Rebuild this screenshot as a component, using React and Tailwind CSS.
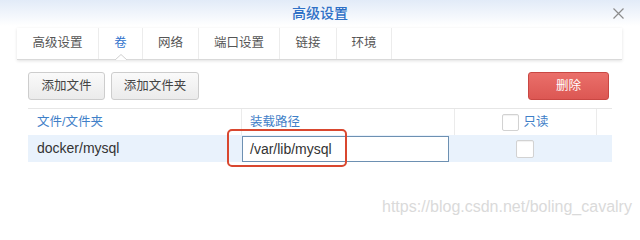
import React from "react";

const tabs = [
  { label: "高级设置", w: "w-[82px]" },
  { label: "卷", w: "w-[44px]", active: true },
  { label: "网络", w: "w-[56px]" },
  { label: "端口设置", w: "w-[81px]" },
  { label: "链接", w: "w-[57px]" },
  { label: "环境", w: "w-[55px]" },
];

function Checkbox({ size }) {
  return (
    <span
      className={`inline-block ${size} bg-white border border-[#d2d2d2] rounded-[2px] shadow-[inset_0_1px_1px_rgba(0,0,0,0.06)]`}
    ></span>
  );
}

export default function App() {
  return (
    <div className="relative w-[640px] h-[226px] overflow-hidden bg-white font-['Liberation_Sans','Noto_Sans_CJK_SC',sans-serif]">
      {/* title bar */}
      <div className="relative h-[26px] flex items-center justify-center bg-gradient-to-b from-[#e2ebf8] to-white">
        <span className="text-[14px] font-medium text-[#2f70c6] leading-none">高级设置</span>
        <svg className="absolute left-[613px] top-[8px]" width="11" height="11" viewBox="0 0 11 11">
          <path d="M0.5 0.5 L10.5 10.5 M10.5 0.5 L0.5 10.5" stroke="#8c8c8c" strokeWidth="1.2" fill="none" />
        </svg>
      </div>

      {/* tabs */}
      <div className="ml-[17px] mt-[2px] w-[605px] h-[32px] flex bg-white border-b border-[#d9d9d9] shadow-[0_1px_3px_rgba(0,0,0,0.12)]">
        {tabs.map((t) => (
          <div
            key={t.label}
            className={`relative ${t.w} h-full flex items-center justify-center border-r border-[#ececec] text-[12.5px] ${
              t.active ? "text-[#2f72cc]" : "text-[#555]"
            }`}
          >
            {t.label}
            {t.active && (
              <svg className="absolute bottom-[-1px] left-1/2 -translate-x-1/2" width="12" height="6" viewBox="0 0 12 6">
                <path d="M0 6 L6 0.5 L12 6 Z" fill="white" />
                <path d="M0 6 L6 0.5 L12 6" stroke="#d0d0d0" strokeWidth="1" fill="none" />
              </svg>
            )}
          </div>
        ))}
      </div>

      {/* toolbar */}
      <div className="ml-[28px] mt-[12px] w-[581px] h-[28px] flex justify-between">
        <div className="flex gap-[6px]">
          <button className="w-[77px] h-[28px] rounded-[3px] border border-[#cdcdcd] bg-gradient-to-b from-[#fafafa] to-[#ebebeb] text-[12.5px] text-[#444]">
            添加文件
          </button>
          <button className="w-[88px] h-[28px] rounded-[3px] border border-[#cdcdcd] bg-gradient-to-b from-[#fafafa] to-[#ebebeb] text-[12.5px] text-[#444]">
            添加文件夹
          </button>
        </div>
        <button className="w-[81px] h-[28px] rounded-[3px] border border-[#c94743] bg-gradient-to-b from-[#ea6f6a] to-[#dc5753] text-[12.5px] text-white">
          删除
        </button>
      </div>

      {/* table */}
      <div className="ml-[28px] mt-[8px] w-[584px] border-t border-[#e6e6e6]">
        <div className="flex h-[26px] text-[12.5px] text-[#3f80c8]">
          <div className="w-[213px] pl-[9px] flex items-center">文件/文件夹</div>
          <div className="w-[213px] pl-[8px] flex items-center border-l border-[#ebebeb]">装载路径</div>
          <div className="w-[142px] flex items-center justify-center gap-[4px] border-l border-[#ebebeb]">
            <Checkbox size="w-[17px] h-[17px]" />
            <span>只读</span>
          </div>
          <div className="w-[16px] border-l border-[#ebebeb]"></div>
        </div>
        <div className="flex h-[27px] bg-[#e9f2fc]">
          <div className="w-[213px] pl-[9px] flex items-center text-[14px] text-[#333]">docker/mysql</div>
          <div className="w-[213px] pl-[1px] pt-[1px]">
            <div className="w-[207px] h-[26px] bg-white border border-[#6d90b2] pl-[7px] flex items-center text-[14px] text-[#333]">
              /var/lib/mysql
            </div>
          </div>
          <div className="w-[142px] flex items-center justify-center">
            <Checkbox size="w-[18px] h-[18px]" />
          </div>
        </div>
      </div>

      {/* annotation */}
      <div className="absolute left-[227px] top-[129px] w-[120px] h-[38px] border-2 border-[#d9472f] rounded-[5px]"></div>

      {/* watermark */}
      <div className="absolute left-[382px] top-[197px] text-[16px] leading-[20px] text-[#dadada]">
        https://blog.csdn.net/boling_cavalry
      </div>
    </div>
  );
}
